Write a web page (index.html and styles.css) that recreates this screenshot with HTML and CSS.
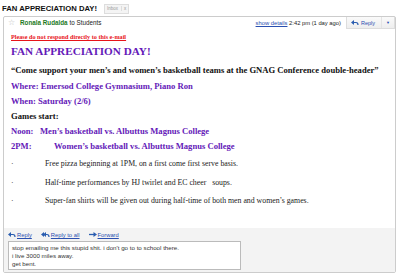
FILE: index.html
```html
<!DOCTYPE html>
<html lang="en">
<head>
  <meta charset="UTF-8">
  <title>FAN APPRECIATION DAY!</title>
  <link rel="stylesheet" href="styles.css">
</head>
<body>
  <!-- Subject -->
  <div class="subject">
    <h1>FAN APPRECIATION DAY!</h1>
    <span class="label">Inbox<span class="x">x</span></span>
  </div>

  <!-- Message -->
  <div class="message">
    <div class="head">
      <span class="star">☆</span>
      <span class="from">Ronala Rudalda</span>
      <span class="to">to Students</span>
      <span class="meta"><a href="#">show details</a> 2:42 pm (1 day ago)</span>
      <div class="reply-btn">
        <span class="reply-main">
          <svg width="8" height="6" viewBox="0 0 8 6"><path d="M3 0 L0 2.5 L3 5 Z" fill="#2a5db0"/><path d="M2.5 2.5 H5 Q7 2.5 7 5" fill="none" stroke="#2a5db0" stroke-width="1.2"/></svg>
          Reply
        </span>
        <span class="reply-drop">▼</span>
      </div>
    </div>

    <div class="body">
      <p class="warn">Please do not respond directly to this e-mail</p>
      <h2>FAN APPRECIATION DAY!</h2>
      <p class="bold quote">“Come support your men’s and women’s basketball teams at the GNAG Conference double-header”</p>
      <p class="purple">Where: Emersod College Gymnasium, Piano Ron</p>
      <p class="purple">When: Saturday (2/6)</p>
      <p class="bold">Games start:</p>
      <p class="purple game"><span class="t1">Noon:</span>Men’s basketball vs. Albuttus Magnus College</p>
      <p class="purple game"><span class="t2">2PM:</span>Women’s basketball vs. Albuttus Magnus College</p>
      <ul class="bullets">
        <li><span class="dot">·</span>Free pizza beginning at 1PM, on a first come first serve basis.</li>
        <li><span class="dot">·</span>Half-time performances by HJ twirlet and EC cheer&nbsp;&nbsp; soups.</li>
        <li><span class="dot">·</span>Super-fan shirts will be given out during half-time of both men and women’s games.</li>
      </ul>
    </div>

    <div class="foot">
      <div class="actions">
        <a href="#"><svg width="8" height="6" viewBox="0 0 8 6"><path d="M3 0 L0 2.5 L3 5 Z" fill="#2a5db0"/><path d="M2.5 2.5 H5 Q7 2.5 7 5" fill="none" stroke="#2a5db0" stroke-width="1.2"/></svg><u>Reply</u></a>
        <a href="#"><svg width="9" height="6" viewBox="0 0 9 6"><path d="M3 0 L0 2.5 L3 5 Z" fill="#2a5db0"/><path d="M5 0 L2 2.5 L5 5 Z" fill="#2a5db0"/><path d="M4 2.5 H6 Q8 2.5 8 5" fill="none" stroke="#2a5db0" stroke-width="1.2"/></svg><u>Reply to all</u></a>
        <a href="#"><svg width="8" height="6" viewBox="0 0 8 6"><path d="M0 2.5 H5" stroke="#2a5db0" stroke-width="1.3"/><path d="M4.5 0 L8 2.5 L4.5 5 Z" fill="#2a5db0"/></svg><u>Forward</u></a>
      </div>
      <div class="reply-box">
        stop emailing me this stupid shit. i don't go to to school there.<br>
        i live 3000 miles away.<br>
        get bent.
      </div>
    </div>
  </div>
</body>
</html>
```

FILE: styles.css
```css
/* General */
body {
  margin: 0;
  background: #fff;
  font-family: 'Liberation Sans', Arial, sans-serif;
  width: 400px;
  height: 276px;
  overflow: hidden;
}

a {
  color: #2a4fb0;
}

/* Subject */
.subject {
  display: flex;
  align-items: center;
  height: 15px;
  padding: 1px 0 0 2px;
}

.subject h1 {
  margin: 0;
  font-size: 7.7px;
  font-weight: bold;
  color: #111;
}

.label {
  margin-left: 7px;
  display: flex;
  align-items: center;
  border: 1px solid #ddd;
  background: #f4f4f4;
  color: #999;
  font-size: 4.5px;
  height: 8px;
  padding: 0 2px;
}

.label .x {
  margin-left: 3px;
  padding-left: 2px;
  border-left: 1px solid #ddd;
}

/* Message box */
.message {
  margin: 0 4px 0 3px;
  border: 1px solid #ccc;
  border-radius: 2px;
  height: 257px;
  display: flex;
  flex-direction: column;
  box-sizing: border-box;
}

.head {
  display: flex;
  align-items: center;
  height: 11px;
  padding-left: 4px;
  font-size: 6.3px;
  color: #222;
}

.star {
  color: #bbb;
  font-size: 8px;
  margin-right: 5px;
}

.from {
  color: #1c7a24;
  font-weight: bold;
  margin-right: 2px;
}

.meta {
  margin-left: auto;
  margin-right: 5px;
  font-size: 5.8px;
}

.reply-btn {
  display: flex;
  align-self: flex-start;
  height: 11px;
  border: 1px solid #ddd;
  border-top: none;
  background: linear-gradient(#fafafa, #eee);
  font-size: 5.5px;
  color: #2a4fb0;
}

.reply-main {
  display: flex;
  align-items: center;
  gap: 2px;
  padding: 0 6px 0 4px;
}

.reply-drop {
  display: flex;
  align-items: center;
  padding: 0 4px;
  font-size: 4px;
  border-left: 1px solid #e4e4e4;
}

/* Body */
.body {
  flex: 1;
  padding: 5px 0 0 7px;
  font-family: 'Liberation Serif', 'Times New Roman', serif;
}

.body p {
  margin: 0;
}

.warn {
  color: #e8141a;
  font-size: 6.2px;
  font-weight: bold;
  text-decoration: underline;
  height: 12px;
}

.body h2 {
  margin: 0;
  color: #6419b8;
  font-size: 11.2px;
  height: 20px;
}

.bold,
.purple {
  font-size: 8.6px;
  font-weight: bold;
  height: 15px;
  color: #111;
}

.quote {
  height: 16px;
}

.purple {
  color: #6419b8;
}

.game span {
  display: inline-block;
}

.t1 {
  width: 29px;
}

.t2 {
  width: 43px;
}

.bullets {
  list-style: none;
  margin: 3px 0 0;
  padding: 0;
  font-size: 7.8px;
  color: #222;
}

.bullets li {
  height: 18.5px;
}

.dot {
  display: inline-block;
  width: 34px;
}

/* Footer */
.foot {
  background: #f3f3f3;
  padding: 4px 0 2px 4px;
  font-size: 5.8px;
}

.actions {
  display: flex;
  gap: 9px;
  margin-bottom: 3px;
}

.actions a {
  display: flex;
  align-items: center;
  gap: 1px;
  text-decoration: none;
}

.reply-box {
  width: 233px;
  box-sizing: border-box;
  background: #fff;
  border: 1px solid #bbb;
  padding: 2px 3px 1px;
  color: #333;
  font-size: 6.2px;
  line-height: 8px;
}
```
